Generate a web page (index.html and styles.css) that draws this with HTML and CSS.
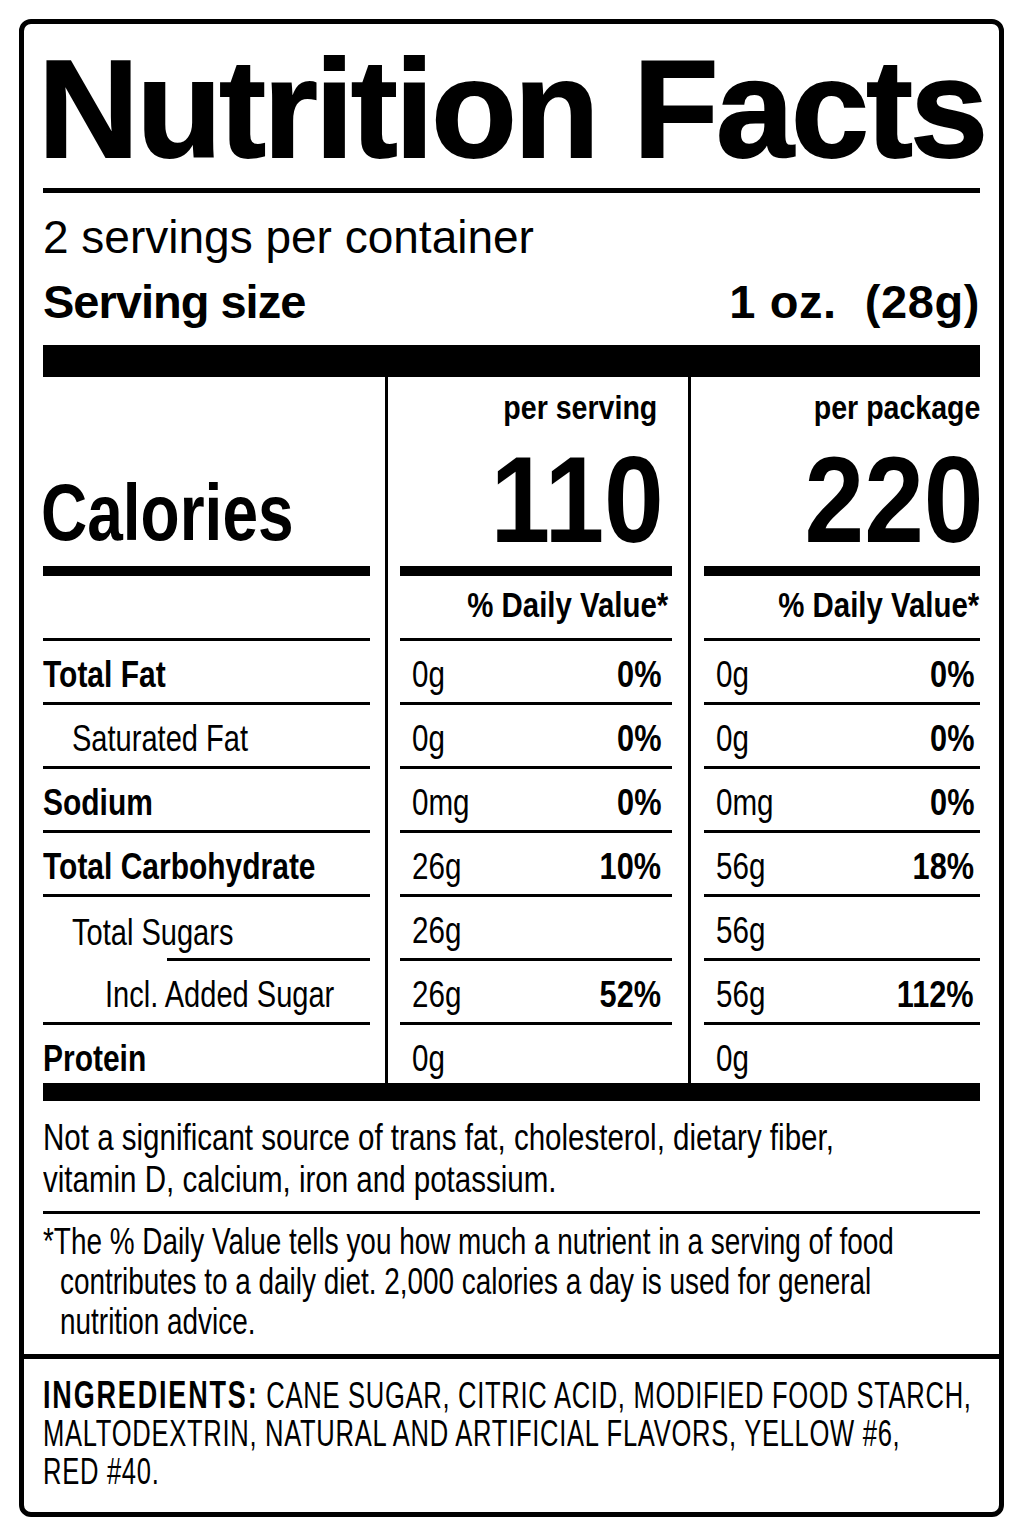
FILE: index.html
```html
<!DOCTYPE html>
<html lang="en">
<head>
<meta charset="utf-8">
<title>Nutrition Facts</title>
<link rel="stylesheet" href="styles.css">
</head>
<body>
<div class="label">
  <section class="main">
    <h1 class="title">Nutrition Facts</h1>
    <div class="rule"></div>
    <p class="servings">2 servings per container</p>
    <div class="serving-size">
      <span class="ss-label">Serving size</span>
      <span class="ss-val"><span>1 oz.</span><span>(28g)</span></span>
    </div>
    <div class="bar"></div>

    <div class="grid">
      <div class="col col-label">
        <div class="cal-head"><span class="c l calories">Calories</span></div>
        <div class="dv-head"></div>
        <div class="row"><b class="c l lbl-b">Total Fat</b></div>
        <div class="row indent1"><span class="c l lbl">Saturated Fat</span></div>
        <div class="row"><b class="c l lbl-b">Sodium</b></div>
        <div class="row"><b class="c l lbl-b">Total Carbohydrate</b></div>
        <div class="row indent1 short-rule"><span class="c l lbl">Total Sugars</span></div>
        <div class="row indent2"><span class="c l lbl">Incl. Added Sugar</span></div>
        <div class="row last"><b class="c l lbl-b">Protein</b></div>
      </div>

      <div class="col col-val col-serving">
        <div class="cal-head"><span class="c r per">per serving</span><span class="c r cal-num">110</span></div>
        <div class="dv-head"><span class="c r dv">% Daily Value*</span></div>
        <div class="row"><span class="c l amt">0g</span><b class="c r pct">0%</b></div>
        <div class="row"><span class="c l amt">0g</span><b class="c r pct">0%</b></div>
        <div class="row"><span class="c l amt">0mg</span><b class="c r pct">0%</b></div>
        <div class="row"><span class="c l amt">26g</span><b class="c r pct">10%</b></div>
        <div class="row"><span class="c l amt">26g</span></div>
        <div class="row"><span class="c l amt">26g</span><b class="c r pct">52%</b></div>
        <div class="row last"><span class="c l amt">0g</span></div>
      </div>

      <div class="col col-val col-package">
        <div class="cal-head"><span class="c r per">per package</span><span class="c r cal-num">220</span></div>
        <div class="dv-head"><span class="c r dv">% Daily Value*</span></div>
        <div class="row"><span class="c l amt">0g</span><b class="c r pct">0%</b></div>
        <div class="row"><span class="c l amt">0g</span><b class="c r pct">0%</b></div>
        <div class="row"><span class="c l amt">0mg</span><b class="c r pct">0%</b></div>
        <div class="row"><span class="c l amt">56g</span><b class="c r pct">18%</b></div>
        <div class="row"><span class="c l amt">56g</span></div>
        <div class="row"><span class="c l amt">56g</span><b class="c r pct">112%</b></div>
        <div class="row last"><span class="c l amt">0g</span></div>
      </div>
    </div>

    <div class="bar-bottom"></div>
    <p class="note">Not a significant source of trans fat, cholesterol, dietary fiber,<br>vitamin D, calcium, iron and potassium.</p>
    <div class="thin-rule"></div>
    <p class="footnote">*The % Daily Value tells you how much a nutrient in a serving of food<br>contributes to a daily diet. 2,000 calories a day is used for general<br>nutrition advice.</p>
  </section>

  <section class="ingredients">
    <p><b>INGREDIENTS:</b> CANE SUGAR, CITRIC ACID, MODIFIED FOOD STARCH,<br>MALTODEXTRIN, NATURAL AND ARTIFICIAL FLAVORS, YELLOW #6,<br>RED #40.</p>
  </section>
</div>
</body>
</html>
```

FILE: styles.css
```css
body {
  margin: 0;
  background: #fff;
  color: #000;
  font-family: "Liberation Sans", Arial, sans-serif;
}

/* condensed text helpers: Helvetica Condensed look via horizontal scale */
.c {
  display: inline-block;
  white-space: nowrap;
}

.l { transform-origin: left center; }
.r { transform-origin: right center; }

.label {
  box-sizing: border-box;
  width: 985px;
  margin: 19px 0 0 19px;
  border: 5px solid #000;
  border-radius: 12px;
}

.main {
  padding: 15px 19px 12px;
}

.title {
  margin: 0 0 0 -5px;
  font-weight: 700;
  font-size: 140px;
  line-height: 140px;
  letter-spacing: -2.7px;
  -webkit-text-stroke: 1.8px #000;
  white-space: nowrap;
}

.rule {
  height: 5px;
  margin-top: 9px;
  background: #000;
}

.servings {
  margin: 16px 0 0;
  font-size: 46px;
  line-height: 56px;
}

.serving-size {
  display: flex;
  justify-content: space-between;
  margin-top: 9px;
  font-weight: 700;
  font-size: 47px;
  line-height: 56px;
}

.ss-label {
  letter-spacing: -1px;
}

.ss-val {
  display: flex;
  gap: 28px;
  letter-spacing: 0.6px;
}

.bar {
  height: 32px;
  margin-top: 15px;
  background: #000;
}

/* ---- table ---- */
.grid {
  display: flex;
}

.col {
  display: flex;
  flex-direction: column;
}

.col-label {
  width: 327px;
  margin-right: 15px;
}

.col-val {
  border-left: 3px solid #000;
  padding-left: 12px;
}

.col-serving {
  width: 272px;
  padding-right: 16px;
}

.col-package {
  flex: 1;
  padding-left: 13px;
}

.cal-head {
  box-sizing: border-box;
  height: 199px;
  border-bottom: 10px solid #000;
  display: flex;
  flex-direction: column;
  justify-content: flex-end;
  align-items: flex-end;
  padding-bottom: 6px;
}

.col-label .cal-head {
  align-items: flex-start;
}

.calories {
  font-weight: 700;
  font-size: 80px;
  line-height: 80px;
  margin-bottom: 7px;
  margin-left: -2px;
  transform: scaleX(0.8);
}

.per {
  font-weight: 700;
  font-size: 34px;
  line-height: 40px;
  margin-bottom: 13px;
  transform: scaleX(0.84);
}

.cal-num {
  font-weight: 700;
  font-size: 122px;
  line-height: 120px;
  transform: scaleX(0.88);
}

.col-serving .per { margin-right: 15px; }
.col-serving .cal-num { margin-right: 8px; }
.col-package .cal-num { margin-right: -4px; }

.dv-head {
  box-sizing: border-box;
  height: 65px;
  border-bottom: 3px solid #000;
  display: flex;
  justify-content: flex-end;
  align-items: flex-end;
  padding-bottom: 16px;
}

.dv {
  font-weight: 700;
  font-size: 35px;
  line-height: 35px;
  transform: scaleX(0.84);
}

.col-serving .dv-head { padding-right: 4px; }
.col-package .dv-head { padding-right: 1px; }

.row {
  box-sizing: border-box;
  height: 64px;
  border-bottom: 3px solid #000;
  display: flex;
  align-items: center;
  justify-content: space-between;
  padding-top: 6px;
  font-size: 37px;
  line-height: 37px;
}

.lbl-b { transform: scaleX(0.81); }
.lbl { transform: scaleX(0.785); }
.amt { transform: scaleX(0.8); }
.pct { transform: scaleX(0.83); }

.col-val .row { padding-left: 12px; }
.col-serving .row { padding-right: 11px; }
.col-package .row { padding-right: 6px; }

.row.last {
  height: 58px;
  border-bottom: 0;
  padding-top: 9px;
}

.indent1 { padding-left: 29px; }
.indent2 { padding-left: 62px; }

.short-rule {
  border-bottom: 0;
  background: linear-gradient(#000, #000) no-repeat right bottom / calc(100% - 124px) 3px;
}

/* ---- bottom ---- */
.bar-bottom {
  height: 18px;
  background: #000;
}

.note {
  margin: 16px 0 0;
  font-size: 36px;
  line-height: 42px;
  white-space: nowrap;
  transform: scaleX(0.82);
  transform-origin: left top;
}

.thin-rule {
  height: 3px;
  margin-top: 10px;
  background: #000;
}

.footnote {
  margin: 8px 0 0;
  padding-left: 22px;
  text-indent: -22px;
  font-size: 36px;
  line-height: 40px;
  white-space: nowrap;
  transform: scaleX(0.775);
  transform-origin: left top;
}

.ingredients {
  border-top: 5px solid #000;
  padding: 17px 19px 21px;
}

.ingredients p {
  margin: 0;
  font-size: 36px;
  line-height: 38px;
  letter-spacing: 1px;
  white-space: nowrap;
  transform: scaleX(0.71);
  transform-origin: left top;
}

.ingredients b {
  font-size: 38px;
  letter-spacing: 2.6px;
}
```
